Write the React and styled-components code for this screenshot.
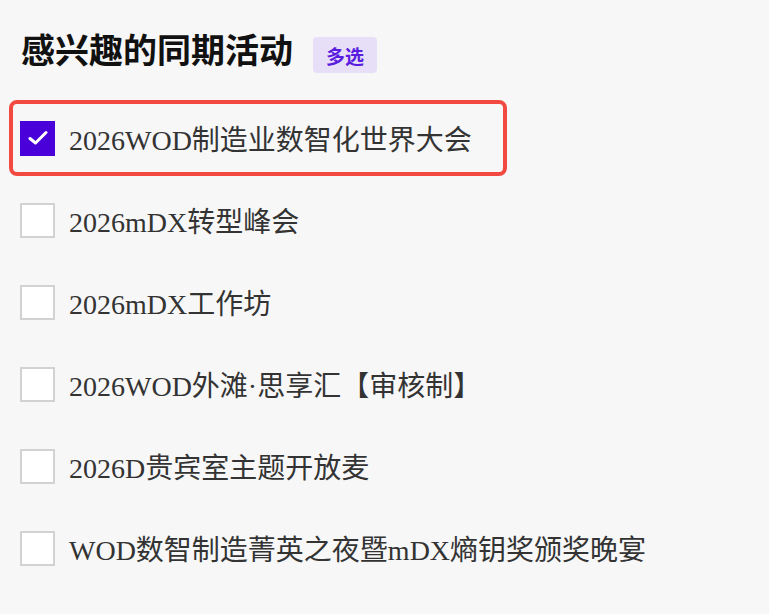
import styled, { createGlobalStyle } from "styled-components";
import { useState } from "react";

const GlobalStyle = createGlobalStyle`
  html, body {
    margin: 0;
    padding: 0;
    background: #f7f7f7;
  }
`;

const Container = styled.section`
  padding: 26px 0 0 9px;
  display: flex;
  flex-direction: column;
`;

const Header = styled.div`
  display: flex;
  align-items: flex-start;
  gap: 20px;
  padding-left: 12px;
  margin-bottom: 27px;
`;

const Title = styled.h2`
  margin: 0;
  font-family: "Noto Sans CJK SC", "Noto Sans", sans-serif;
  font-weight: 700;
  font-size: 34px;
  line-height: 46px;
  color: #111;
`;

const Badge = styled.span`
  margin-top: 11px;
  width: 64px;
  height: 36px;
  border-radius: 4px;
  background: #e7dff8;
  color: #5a1de0;
  font-family: "Noto Sans CJK SC", "Noto Sans", sans-serif;
  font-weight: 700;
  font-size: 19px;
  display: flex;
  align-items: center;
  justify-content: center;
`;

const List = styled.div`
  display: flex;
  flex-direction: column;
  align-items: flex-start;
  gap: 6px;
`;

const Item = styled.label`
  box-sizing: border-box;
  height: 76px;
  display: flex;
  align-items: center;
  gap: 14px;
  padding: 0 31px 0 7px;
  border: 4px solid ${(p) => (p.highlight ? "#f24a40" : "transparent")};
  border-radius: 8px;
  cursor: pointer;
`;

const Box = styled.span`
  box-sizing: border-box;
  width: 35px;
  height: 35px;
  flex-shrink: 0;
  display: flex;
  align-items: center;
  justify-content: center;
  background: ${(p) => (p.checked ? "#4a00d8" : "#fff")};
  border: 2px solid ${(p) => (p.checked ? "#4a00d8" : "#d2d2d2")};
`;

const Label = styled.span`
  font-family: "Liberation Serif", "Noto Sans CJK SC", serif;
  font-size: 28px;
  color: #333;
  white-space: nowrap;
`;

const options = [
  "2026WOD制造业数智化世界大会",
  "2026mDX转型峰会",
  "2026mDX工作坊",
  "2026WOD外滩·思享汇【审核制】",
  "2026D贵宾室主题开放麦",
  "WOD数智制造菁英之夜暨mDX熵钥奖颁奖晚宴",
];

const Check = () => (
  <svg width="20" height="16" viewBox="0 0 20 16" fill="none">
    <path
      d="M2 8.5 L7.5 13 L18 2.5"
      stroke="#fff"
      strokeWidth="3"
      strokeLinecap="round"
      strokeLinejoin="round"
    />
  </svg>
);

const App = () => {
  const [selected, setSelected] = useState([0]);

  const toggle = (i) => {
    setSelected((s) => (s.includes(i) ? s.filter((x) => x !== i) : [...s, i]));
  };

  return (
    <>
      <GlobalStyle />
      <Container>
        <Header>
          <Title>感兴趣的同期活动</Title>
          <Badge>多选</Badge>
        </Header>
        <List>
          {options.map((o, i) => (
            <Item key={o} highlight={i === 0} onClick={() => toggle(i)}>
              <Box checked={selected.includes(i)}>
                {selected.includes(i) && <Check />}
              </Box>
              <Label>{o}</Label>
            </Item>
          ))}
        </List>
      </Container>
    </>
  );
};

export default App;
